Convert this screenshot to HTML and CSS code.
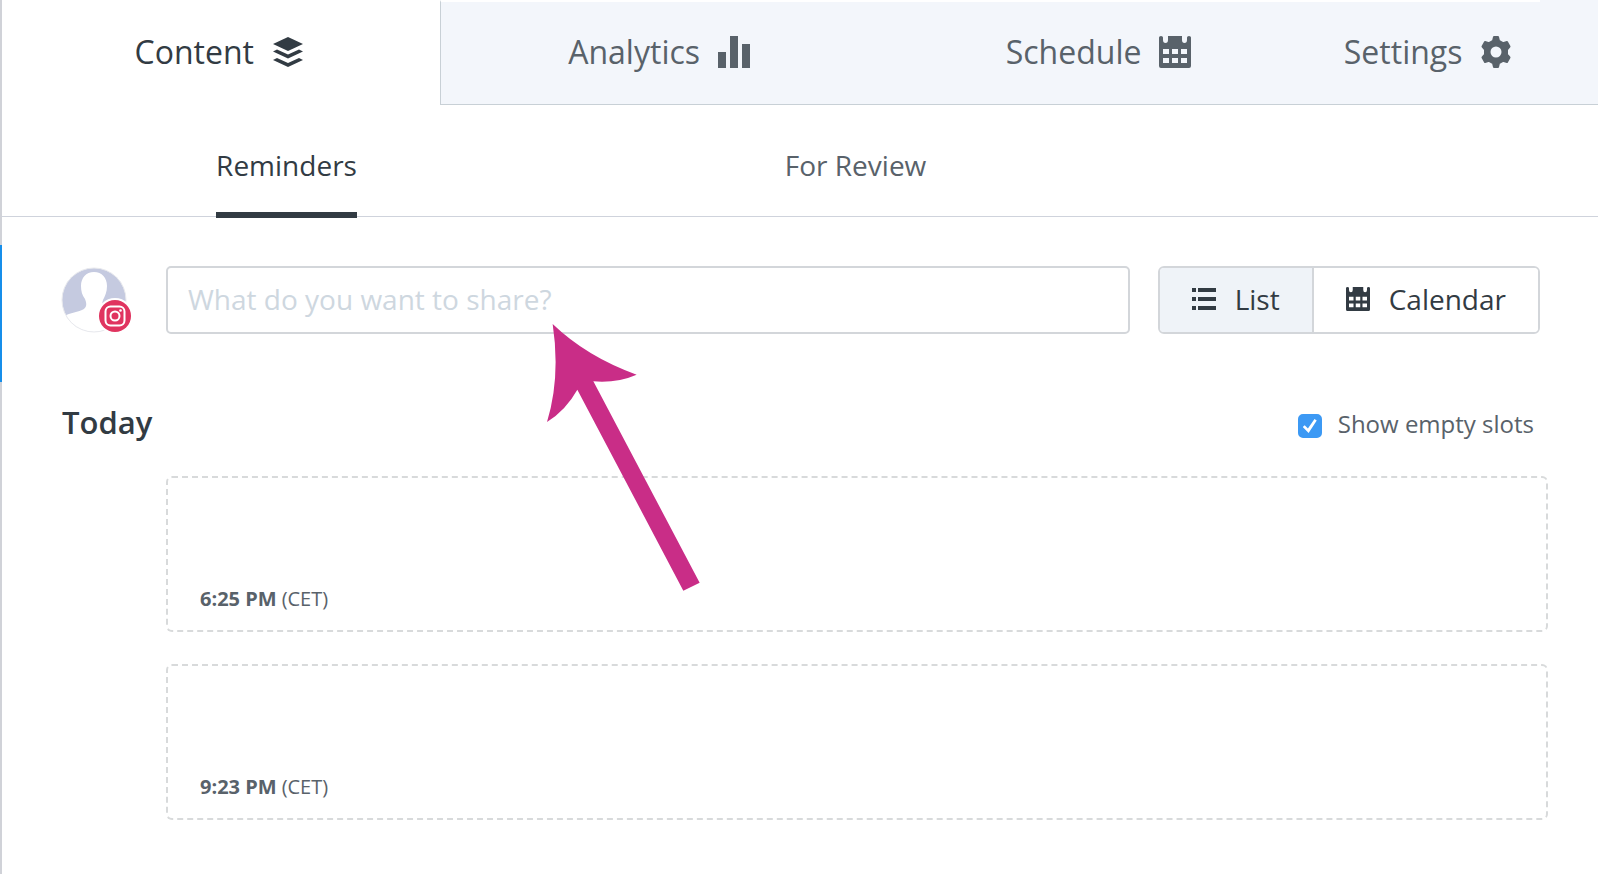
FILE: index.html
```
<!DOCTYPE html>
<html lang="en">
<head>
    <meta charset="UTF-8">
    <meta name="viewport" content="width=device-width, initial-scale=1.0">
    <title>Content - Reminders</title>
    <link rel="stylesheet" href="styles.css">
</head>
<body>
    <!-- Shared icons -->
    <svg class="sprite" aria-hidden="true">
        <symbol id="icon-calendar" viewBox="0 0 32 32">
            <path fill-rule="evenodd" d="M0 1.5Q0 0 2 0Q4 0 4 1.5V4Q4 7 6.500 7Q9 7 9 4V0H23V4Q23 7 25.500 7Q28 7 28 4V1.5Q28 0 30 0Q32 0 32 1.5V30Q32 32 30 32H2Q0 32 0 30ZM4 13V18H10V13ZM13 13V18H19V13ZM22 13V18H28V13ZM4 22V27H10V22ZM13 22V27H19V22ZM22 22V27H28V22Z"/>
        </symbol>
    </svg>

    <aside class="sidebar">
        <div class="selected-profile"></div>
    </aside>

    <main class="main">
        <nav class="tabs">
            <a href="#" class="tab active">Content
                <svg class="icon" viewBox="0 0 32 32">
                    <path d="M16 1L31 8L16 15L1 8Z"/>
                    <path d="M1 15.500L5 13.500L16 18.500L27 13.500L31 15.500L16 22.500Z"/>
                    <path d="M1 24L5 22L16 27L27 22L31 24L16 31Z"/>
                </svg>
            </a>
            <a href="#" class="tab">Analytics
                <svg class="icon" viewBox="0 0 32 32">
                    <path d="M0 16H8V32H0ZM12 0H20V32H12ZM24 8H32V32H24Z"/>
                </svg>
            </a>
            <a href="#" class="tab">Schedule
                <svg class="icon"><use href="#icon-calendar"/></svg>
            </a>
            <a href="#" class="tab">Settings
                <svg class="icon" viewBox="0 0 32 32">
                    <path fill-rule="evenodd" stroke="currentColor" stroke-width="2" stroke-linejoin="round" d="M14 1H18L19 5L23 7.200L27 6L29.500 10.500L27 13.500V18.500L29.500 21.500L27 26L23 24.800L19 27L18 31H14L13 27L9 24.800L5 26L2.500 21.500L5 18.500V13.500L2.500 10.500L5 6L9 7.200L13 5ZM16 9.500A6.500 6.500 0 1 0 16 22.500A6.500 6.500 0 1 0 16 9.500Z"/>
                </svg>
            </a>
        </nav>

        <nav class="subtabs">
            <a href="#" class="subtab active">Reminders</a>
            <a href="#" class="subtab">For Review</a>
        </nav>

        <div class="composer">
            <div class="avatar">
                <svg class="avatar-image" viewBox="0 0 66 66">
                    <defs>
                        <clipPath id="avatar-clip"><circle cx="33" cy="33" r="32"/></clipPath>
                    </defs>
                    <circle cx="33" cy="33" r="32" fill="#c5cae0"/>
                    <path clip-path="url(#avatar-clip)" fill="#fff" d="M33 5C41 5 46 11 46 19C46 25 44 29 42 33C40 39 42 41 47 43C56 46 62 46 66 52V66H0V52C5 46 14 46 21 43C26 41 26 37 24 32C21 28 20 24 20 19C20 11 25 5 33 5Z"/>
                    <circle cx="33" cy="33" r="32" fill="none" stroke="#e9eaee" stroke-width="1"/>
                </svg>
                <svg class="badge" viewBox="0 0 36 36">
                    <circle cx="18" cy="18" r="18" fill="#fff"/>
                    <circle cx="18" cy="18" r="16" fill="#e0345f"/>
                    <rect x="8.500" y="8.500" width="19" height="19" rx="5" fill="none" stroke="#fff" stroke-width="2"/>
                    <circle cx="18" cy="18" r="4.500" fill="none" stroke="#fff" stroke-width="2"/>
                    <circle cx="23.500" cy="12.500" r="1.300" fill="#fff"/>
                </svg>
            </div>
            <div class="share">
                <input type="text" class="share-input" placeholder="What do you want to share?" aria-label="What do you want to share?">
                <svg class="arrow" viewBox="51 42 459 801">
                    <path d="M68 42Q170 140 320 194Q260 220 190 214L509 818L460 842L142 239Q108 300 51 336Q92 200 68 42Z"/>
                </svg>
            </div>
            <div class="view-switch">
                <button type="button" class="view-button active">
                    <svg class="small-icon" viewBox="0 0 24 24">
                        <path d="M0 1H4V5H0ZM6 1H24V5H6ZM0 10H4V14H0ZM6 10H24V14H6ZM0 19H4V23H0ZM6 19H24V23H6Z"/>
                    </svg>
                    List
                </button>
                <button type="button" class="view-button">
                    <svg class="small-icon"><use href="#icon-calendar"/></svg>
                    Calendar
                </button>
            </div>
        </div>

        <section class="day">
            <div class="day-header">
                <h2>Today</h2>
                <label class="empty-toggle">
                    <input type="checkbox" checked>
                    <span>Show empty slots</span>
                </label>
            </div>
            <div class="slot"><strong>6:25 PM</strong> (CET)</div>
            <div class="slot"><strong>9:23 PM</strong> (CET)</div>
        </section>
    </main>
</body>
</html>
```
FILE: styles.css
```
* {
    box-sizing: border-box;
}

body {
    display: flex;
    margin: 0;
    min-height: 100vh;
    background-color: #fff;
    color: #59626a;
    font-family: 'Open Sans', 'Noto Sans', sans-serif;
}

a {
    color: inherit;
    text-decoration: none;
}

svg {
    display: block;
    fill: currentColor;
}

.sprite {
    position: absolute;
    width: 0;
    height: 0;
}

.sidebar {
    flex: none;
    width: 2px;
    padding-top: 245px;
    background-color: #d0d2d8;
}

.selected-profile {
    height: 137px;
    background-color: #168eea;
}

.main {
    flex: 1;
    min-width: 0;
}

/* Top tabs */
.tabs {
    display: grid;
    grid-template-columns: 2fr 2fr 2fr 1fr;
    height: 105px;
    padding-right: 58px;
    background-color: #f3f6fb;
    box-shadow: inset 0 -1px #c8d0d6;
}

.tab {
    display: flex;
    align-items: center;
    justify-content: center;
    gap: 18px;
    padding: 0 4px 4px 0;
    border-top: 2px solid #fff;
    font-size: 32px;
}

.tab.active {
    background-color: #fff;
    border-right: 1px solid #c8d0d6;
    color: #323b43;
}

.icon {
    width: 32px;
    height: 32px;
}

/* Second row of tabs */
.subtabs {
    display: grid;
    grid-template-columns: 37% 37%;
    justify-items: center;
    height: 112px;
    padding-right: 58px;
    border-bottom: 1px solid #cfd3dc;
}

.subtab {
    height: 113px;
    padding-top: 41px;
    font-size: 28px;
    line-height: 38px;
}

.subtab.active {
    border-bottom: 6px solid #323b43;
    color: #323b43;
}

/* Composer */
.composer {
    display: flex;
    align-items: center;
    margin: 49px 58px 0 59px;
}

.avatar {
    position: relative;
    width: 66px;
    height: 66px;
    margin-right: 39px;
}

.avatar-image {
    width: 66px;
    height: 66px;
}

.badge {
    position: absolute;
    right: -6px;
    bottom: -1px;
    width: 36px;
    height: 36px;
}

.share {
    position: relative;
    flex: 1;
    margin-right: 28px;
}

.share-input {
    display: block;
    width: 100%;
    height: 68px;
    padding: 0 20px 2px;
    border: 2px solid #d3d6da;
    border-radius: 5px;
    color: #323b43;
    font-family: inherit;
    font-size: 28px;
}

.share-input::placeholder {
    color: #ced7df;
}

.arrow {
    position: absolute;
    z-index: 1;
    top: 58px;
    left: 381px;
    width: 153px;
    height: 267px;
    color: #c92d87;
    pointer-events: none;
}

.view-switch {
    display: flex;
    height: 68px;
    border: 2px solid #d3d6da;
    border-radius: 6px;
    overflow: hidden;
}

.view-button {
    display: flex;
    align-items: center;
    gap: 19px;
    padding: 0 32px 2px;
    border: 0;
    background-color: #fff;
    color: #323b43;
    font-family: inherit;
    font-size: 28px;
}

.view-button.active {
    border-right: 2px solid #d3d6da;
    background-color: #eff3f8;
}

.small-icon {
    width: 24px;
    height: 24px;
}

/* Day */
.day {
    margin: 64px 50px 54px 60px;
}

.day-header {
    display: flex;
    align-items: center;
    justify-content: space-between;
    margin-bottom: 30px;
    padding-right: 14px;
}

.day-header h2 {
    margin: 0;
    color: #323b43;
    font-size: 31px;
    font-weight: 600;
    line-height: 48px;
}

.empty-toggle {
    display: flex;
    align-items: center;
    gap: 16px;
    padding-top: 8px;
    font-size: 24px;
    line-height: 32px;
}

.empty-toggle span {
    padding-bottom: 4px;
}

.empty-toggle input {
    appearance: none;
    display: grid;
    place-items: center;
    width: 24px;
    height: 24px;
    margin: 0;
    border-radius: 5px;
    background-color: #fff;
    border: 2px solid #3c99f4;
}

.empty-toggle input:checked {
    background-color: #3c99f4;
}

.empty-toggle input:checked::after {
    content: '';
    width: 14px;
    height: 14px;
    background-color: #fff;
    clip-path: polygon(0 58%, 14% 44%, 37% 68%, 84% 0, 100% 10%, 42% 100%);
}

.slot {
    display: flex;
    align-items: flex-end;
    gap: 5px;
    height: 156px;
    margin-left: 104px;
    padding: 0 32px 17px;
    border: 2px dashed #d8dadb;
    border-radius: 6px;
    font-size: 20px;
    line-height: 28px;
}

.slot + .slot {
    margin-top: 32px;
}
```
